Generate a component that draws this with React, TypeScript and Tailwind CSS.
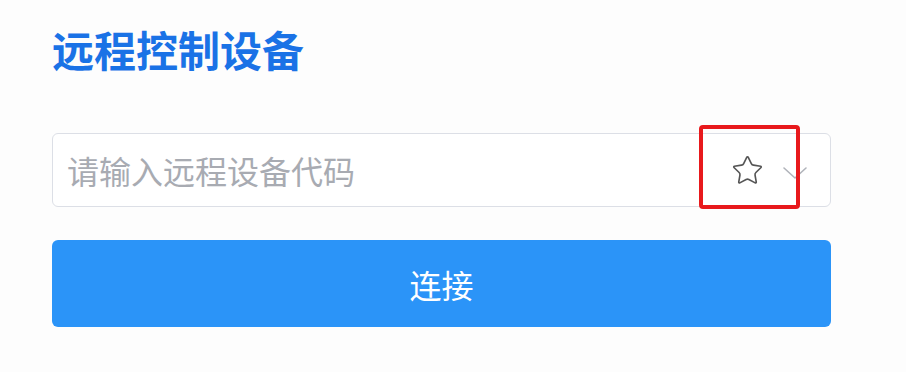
import { Star } from "lucide-react";

export default function App() {
  return (
    <div className="h-[372px] w-[906px] overflow-hidden bg-[#fdfdfd] font-['Noto_Sans_CJK_SC',sans-serif]">
      <div className="ml-[52px] w-[779px] pt-[24px]">
        <h1 className="h-[50px] text-[42px] font-bold leading-[50px] text-[#1a72e6]">远程控制设备</h1>

        {/* code input */}
        <div className="relative mt-[59px] flex h-[74px] items-center rounded-[6px] border border-[#dcdfe6] bg-white pl-[14px] pr-[22px]">
          <input
            placeholder="请输入远程设备代码"
            className="min-w-0 flex-1 bg-transparent text-[32px] text-[#303133] outline-none placeholder:text-[#a8abb2]"
          />
          <Star className="mr-[18px] h-[33px] w-[33px] text-[#555]" strokeWidth={1.2} />
          <svg width="26" height="14" viewBox="0 0 26 14" className="mt-[6px] text-[#b0b3ba]">
            <polyline points="2,2 13,12 24,2" fill="none" stroke="currentColor" strokeWidth="1.6" strokeLinecap="round" strokeLinejoin="round" />
          </svg>
          {/* annotation */}
          <div className="pointer-events-none absolute left-[646px] top-[-9px] h-[84px] w-[101px] rounded-[4px] border-[4px] border-[#e8191c]" />
        </div>

        <button className="mt-[33px] flex h-[87px] w-full items-center justify-center rounded-[6px] bg-[#2b94f8] text-[32px] text-white">
          连接
        </button>
      </div>
    </div>
  );
}
